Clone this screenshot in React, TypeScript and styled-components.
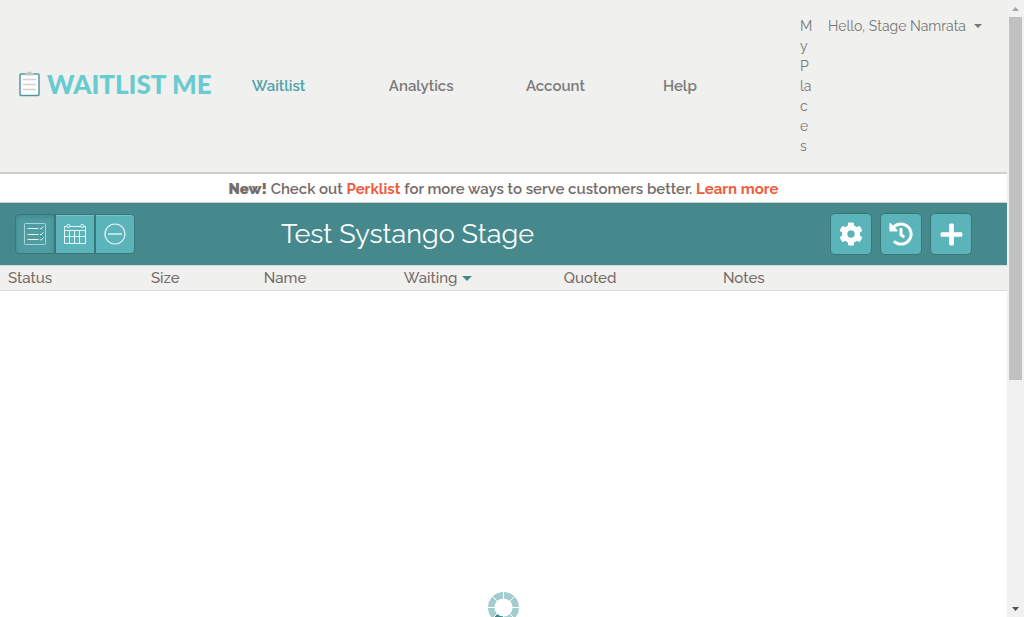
import React from "react";
import styled, { createGlobalStyle, css } from "styled-components";
import { FaCog, FaHistory, FaPlus } from "react-icons/fa";

const GlobalStyle = createGlobalStyle`
  * { box-sizing: border-box; }
  body {
    margin: 0;
    background: #fff;
    color: #766b69;
    font: 500 15px/20px Raleway, Lato, "Open Sans", sans-serif;
  }
  a { color: inherit; text-decoration: none; }
  button { font: inherit; cursor: pointer; }
`;

const Shell = styled.div`
  display: flex;
  height: 100vh;
  overflow: hidden;
`;

const Page = styled.div`
  flex: 1;
  min-width: 0;
`;

const Header = styled.header`
  display: grid;
  grid-template-columns: 25% minmax(0, 1fr) 28px 179px;
  padding: 16px 0;
  background: #f0f0ee;
  border-bottom: 2px solid #cfcfcf;
`;

const Logo = styled.a`
  display: flex;
  align-items: center;
  align-self: center;
  gap: 7px;
  padding: 0 0 4px 19px;
  color: #67cbd0;
  font-family: Lato, sans-serif;
  font-size: 26px;
  font-weight: 900;
  line-height: 28px;
  white-space: nowrap;
`;

const Nav = styled.nav`
  display: grid;
  grid-template-columns: repeat(4, 1fr);
  align-self: center;
`;

const NavLink = styled.a<{ $active?: boolean }>`
  color: ${(p) => (p.$active ? "#50a3a9" : "#7b7b7b")};
  font-weight: 600;
`;

const Places = styled.a`
  width: 12px;
  color: #777;
  font-size: 14px;
  font-weight: 400;
  word-break: break-all;
`;

const UserMenu = styled.button`
  display: flex;
  align-items: center;
  align-self: start;
  gap: 8px;
  padding: 0;
  border: 0;
  background: none;
  color: #777;
  font-size: 14px;
  font-weight: 400;
  white-space: nowrap;
`;

const Caret = styled.span<{ $teal?: boolean }>`
  display: inline-block;
  border: ${(p) => (p.$teal ? 5 : 4)}px solid transparent;
  border-top-color: ${(p) => (p.$teal ? "#45898c" : "#777")};
  border-bottom: 0;
  vertical-align: middle;
`;

const Notice = styled.p`
  margin: 0;
  padding: 5px 0 3px;
  border-bottom: 1px solid #cfcfcf;
  font-weight: 600;
  text-align: center;

  a { color: #f15b40; font-weight: 700; }
  strong { font-weight: 900; }
`;

const Toolbar = styled.div`
  display: flex;
  align-items: center;
  height: 62px;
  padding-right: 35px;
  background: #45898c;
`;

const Views = styled.div`
  display: flex;
  width: 135px;
  padding-left: 15px;
`;

const raised = css`
  display: flex;
  align-items: center;
  justify-content: center;
  padding: 0;
  border: 1px solid #37777a;
  background: #5cb4bb;
  color: #fff;
`;

const ViewButton = styled.button<{ $active?: boolean }>`
  ${raised}
  width: 40px;
  height: 40px;
  box-shadow: inset 0 1px 0 #78c3c8;

  &:first-child { border-radius: 4px 0 0 4px; }
  &:last-child { border-radius: 0 4px 4px 0; }
  ${(p) =>
    p.$active &&
    css`
      background: #4f9da2;
      box-shadow: inset 0 2px 5px #42888c;
    `}
`;

const Title = styled.h1`
  flex: 1;
  margin: 0;
  padding-right: 150px;
  color: #fff;
  font-size: 27px;
  font-weight: 400;
  line-height: 36px;
  text-align: center;
`;

const Actions = styled.div`
  display: flex;
  gap: 8px;
`;

const ActionButton = styled.button`
  ${raised}
  width: 42px;
  height: 42px;
  border-radius: 5px;
`;

const Guests = styled.table`
  width: 100%;
  table-layout: fixed;
  border-collapse: collapse;
  background: #f0f0ee;
  border-top: 1px solid #dadada;
  border-bottom: 1px solid #dadada;
`;

const Column = styled.th<{ $width?: string }>`
  width: ${(p) => p.$width ?? "auto"};
  height: 25px;
  padding: 0 8px;
  font-weight: 500;
  text-align: left;
  white-space: nowrap;
`;

const SortButton = styled.button`
  display: flex;
  align-items: center;
  gap: 5px;
  padding: 0;
  border: 0;
  background: none;
  color: inherit;
`;

const Loading = styled.div`
  display: flex;
  justify-content: center;
  padding-top: 301px;
`;

const ScrollTrack = styled.div`
  display: flex;
  flex-direction: column;
  align-items: center;
  justify-content: space-between;
  width: 17px;
  padding: 0 2px;
  background: #f1f1f1;
`;

const Arrow = styled.span<{ $down?: boolean }>`
  display: flex;
  align-items: center;
  justify-content: center;
  height: 17px;
  color: ${(p) => (p.$down ? "#505050" : "#a3a3a3")};
`;

const ScrollLane = styled.div`
  flex: 1;
  width: 100%;
`;

const Thumb = styled.div`
  width: 100%;
  height: 62.3%;
  background: #c1c1c1;
`;

const columns = [
  { label: "Status", width: "14.2%" },
  { label: "Size", width: "11.2%" },
  { label: "Name", width: "13.9%" },
  { label: "Waiting", width: "15.9%", sorted: true },
  { label: "Quoted", width: "15.8%" },
  { label: "Notes" },
];

const Clipboard = () => (
  <svg width="21" height="26" viewBox="0 0 21 26" aria-hidden="true">
    <rect x="1" y="3" width="19" height="21.5" rx="1" fill="#fff" stroke="#50989c" strokeWidth="1.5" />
    <path d="M4 8.5h13M4 13.5h13M4 18.5h13" stroke="#d0d0d0" strokeWidth="1.3" />
    <path d="M6 4.500V3Q6.500 2 8 2Q8.500 .5 10.500 .5Q12.500 .5 13 2Q14.500 2 15 3V4.500z" fill="#c4c4c4" />
  </svg>
);

const ListIcon = () => (
  <svg width="22" height="22" viewBox="0 0 22 22" fill="none" stroke="#a9d3d6" aria-hidden="true">
    <rect x=".5" y=".5" width="21" height="21" rx=".8" />
    <path d="M3.500 5.500h11M3.500 11.500h11M3.500 16.500h11" stroke="#e4f4f5" />
    <path d="M16 5.200l1 1 2.500-2.700M16 11l1 1 2.500-2.700M16 16.300l1 1 2.500-2.700" stroke="#e4f4f5" />
  </svg>
);

const CalendarIcon = () => (
  <svg width="22" height="22" viewBox="0 0 22 22" fill="none" stroke="#e6f6f7" aria-hidden="true">
    <path d="M.5 3v17.500h21V3M.5 3.500h2M6 3.500h10.500M20 3.500h1.500M.5 7.500h21M.5 13.500h21M5.500 7.500v13M10.500 7.500v13M15.500 7.500v13" />
    <circle cx="4.300" cy="3" r="1.600" />
    <circle cx="18.300" cy="3" r="1.600" />
  </svg>
);

const MinusIcon = () => (
  <svg width="22" height="22" viewBox="0 0 22 22" fill="none" stroke="#e6f6f7" aria-hidden="true">
    <circle cx="11" cy="11" r="10" strokeWidth="1.200" />
    <path d="M4 11h14" strokeWidth="1.800" stroke="#c4e8ea" />
  </svg>
);

const Spinner = () => (
  <svg width="31" height="31" viewBox="0 0 31 31" role="img" aria-label="Loading">
    <circle cx="15.500" cy="15.500" r="12.300" fill="none" stroke="#a3cccf" strokeWidth="6.400" />
    <path d="M6.800 24.200A12.300 12.300 0 0 0 15.500 27.800" fill="none" stroke="#38868b" strokeWidth="6.400" />
    <path d="M15.500 0v31M0 15.500h31M4.500 4.500l22 22M26.500 4.500l-22 22" stroke="#fff" />
  </svg>
);

export default function App() {
  return (
    <>
      <GlobalStyle />
      <Shell>
        <Page>
          <Header>
            <Logo href="#">
              <Clipboard />
              WAITLIST ME
            </Logo>
            <Nav>
              <NavLink href="#waitlist" $active>Waitlist</NavLink>
              <NavLink href="#analytics">Analytics</NavLink>
              <NavLink href="#account">Account</NavLink>
              <NavLink href="#help">Help</NavLink>
            </Nav>
            <Places href="#places">My Places</Places>
            <UserMenu>
              Hello, Stage Namrata
              <Caret />
            </UserMenu>
          </Header>
          <main>
            <Notice>
              <strong>New!</strong> Check out <a href="#perklist">Perklist</a> for more ways to serve
              customers better. <a href="#learn">Learn more</a>
            </Notice>
            <Toolbar>
              <Views>
                <ViewButton $active aria-label="List"><ListIcon /></ViewButton>
                <ViewButton aria-label="Calendar"><CalendarIcon /></ViewButton>
                <ViewButton aria-label="Removed"><MinusIcon /></ViewButton>
              </Views>
              <Title>Test Systango Stage</Title>
              <Actions>
                <ActionButton aria-label="Settings"><FaCog size={24} /></ActionButton>
                <ActionButton aria-label="History"><FaHistory size={24} /></ActionButton>
                <ActionButton aria-label="Add"><FaPlus size={25} /></ActionButton>
              </Actions>
            </Toolbar>
            <Guests>
              <thead>
                <tr>
                  {columns.map((c) => (
                    <Column key={c.label} $width={c.width} scope="col">
                      {c.sorted ? (
                        <SortButton>
                          {c.label}
                          <Caret $teal />
                        </SortButton>
                      ) : (
                        c.label
                      )}
                    </Column>
                  ))}
                </tr>
              </thead>
            </Guests>
            <Loading>
              <Spinner />
            </Loading>
          </main>
        </Page>
        <ScrollTrack aria-hidden="true">
          <Arrow>
            <svg width="7" height="4" viewBox="0 0 7 4"><path d="M0 4L3.500 0L7 4z" fill="currentColor" /></svg>
          </Arrow>
          <ScrollLane><Thumb /></ScrollLane>
          <Arrow $down>
            <svg width="7" height="4" viewBox="0 0 7 4"><path d="M0 0h7L3.500 4z" fill="currentColor" /></svg>
          </Arrow>
        </ScrollTrack>
      </Shell>
    </>
  );
}
